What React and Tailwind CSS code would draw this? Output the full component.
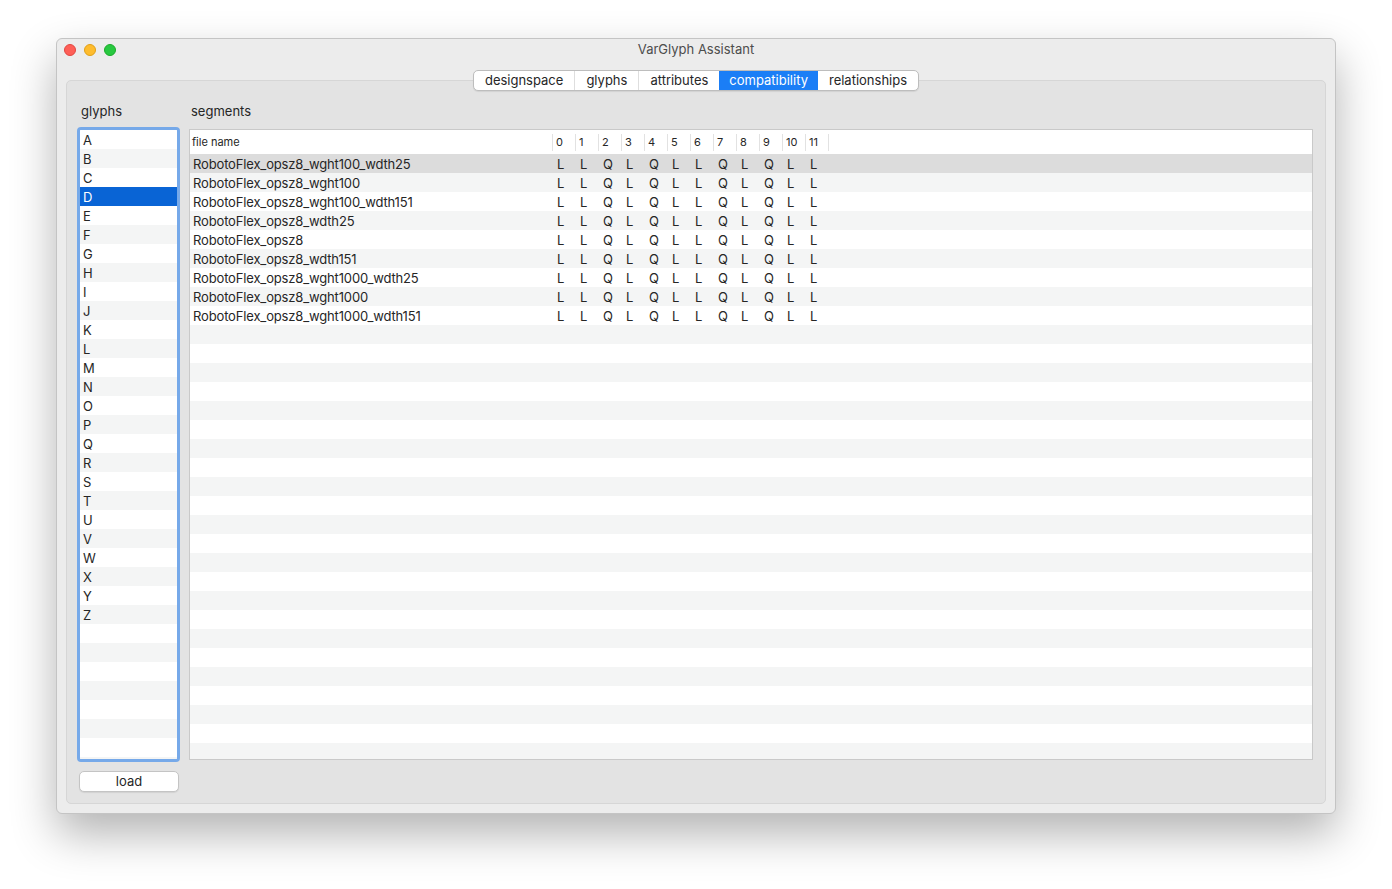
const tabs = ['designspace', 'glyphs', 'attributes', 'compatibility', 'relationships']
const glyphs = 'ABCDEFGHIJKLMNOPQRSTUVWXYZ'.split('')
const files = [
  'RobotoFlex_opsz8_wght100_wdth25',
  'RobotoFlex_opsz8_wght100',
  'RobotoFlex_opsz8_wght100_wdth151',
  'RobotoFlex_opsz8_wdth25',
  'RobotoFlex_opsz8',
  'RobotoFlex_opsz8_wdth151',
  'RobotoFlex_opsz8_wght1000_wdth25',
  'RobotoFlex_opsz8_wght1000',
  'RobotoFlex_opsz8_wght1000_wdth151',
]
const segs = ['L', 'L', 'Q', 'L', 'Q', 'L', 'L', 'Q', 'L', 'Q', 'L', 'L']
const cols = [0, 1, 2, 3, 4, 5, 6, 7, 8, 9, 10, 11]

function TabBar() {
  return (
    <div className="flex justify-center h-[21px] relative z-10">
      <div className="flex rounded-[5px] border border-[#bdbdbd] bg-white overflow-hidden shadow-[0_1px_1px_rgba(0,0,0,0.08)]">
        {tabs.map((t, i) => (
          <div
            key={t}
            className={
              t === 'compatibility'
                ? 'px-[10px] leading-[19px] bg-[#1b7ef6] text-white'
                : 'px-[11px] leading-[19px] text-[#262626]' + (i > 0 && tabs[i - 1] !== 'compatibility' ? ' border-l border-[#dedede]' : '')
            }
          >
            {t}
          </div>
        ))}
      </div>
    </div>
  )
}

function GlyphList() {
  const rows = Array.from({ length: 34 }, (_, i) => glyphs[i] || '')
  return (
    <div className="h-[635px] w-[103px] rounded-[4px] border-[3px] border-[#76a9e9] bg-white overflow-hidden">
      {rows.map((g, i) => (
        <div
          key={i}
          className={
            'h-[19px] pt-[1px] leading-[18px] pl-[3px] ' +
            (g === 'D' ? 'bg-[#0964d5] text-white' : i % 2 ? 'bg-[#f4f5f5]' : 'bg-white')
          }
        >
          {g}
        </div>
      ))}
    </div>
  )
}

function SegmentTable() {
  const rows = Array.from({ length: 33 }, (_, i) => files[i])
  return (
    <div className="h-[631px] border border-[#c9c9c9] bg-white overflow-hidden">
      <div className="flex items-center h-[24px] text-[11px] text-[#262626] bg-white">
        <div className="w-[363px] h-[17px] leading-[17px] pl-[2px] border-r border-[#e2e2e2]">file name</div>
        {cols.map((c) => (
          <div key={c} className="w-[23px] h-[17px] leading-[17px] pl-[3px] border-r border-[#e2e2e2]">
            {c}
          </div>
        ))}
      </div>
      {rows.map((f, i) => (
        <div
          key={i}
          className={
            'flex h-[19px] pt-[1px] leading-[18px] ' +
            (i === 0 ? 'bg-[#dcdcdc]' : i % 2 ? 'bg-[#f4f5f5]' : 'bg-white')
          }
        >
          {f && (
            <>
              <div className="w-[363px] pl-[3px] tracking-[-0.15px]">{f}</div>
              {segs.map((s, j) => (
                <div key={j} className="w-[23px] pl-[4px]">
                  {s}
                </div>
              ))}
            </>
          )}
        </div>
      ))}
    </div>
  )
}

export default function App() {
  return (
    <div className="w-[1392px] h-[889px] bg-white pt-[38px] pl-[56px] font-['Inter','Liberation_Sans',sans-serif] text-[13px] text-[#262626]">
      <div className="w-[1280px] h-[776px] rounded-[6px] bg-[#ececec] border border-[#c4c4c4] shadow-[0_20px_45px_rgba(0,0,0,0.3)] flex flex-col">
        <div className="h-[22px] flex items-center relative">
          <div className="flex gap-[8px] pl-[7px]">
            <span className="w-[12px] h-[12px] rounded-full bg-[#fe5f57] border border-[#e24640]" />
            <span className="w-[12px] h-[12px] rounded-full bg-[#febc2e] border border-[#e1a016]" />
            <span className="w-[12px] h-[12px] rounded-full bg-[#28c840] border border-[#1aab29]" />
          </div>
          <div className="flex-1 text-center text-[#4d4d4d] pr-[59px]">VarGlyph Assistant</div>
        </div>
        <div className="px-[9px] pt-[9px]">
          <TabBar />
          <div className="-mt-[11px] h-[724px] rounded-[5px] border border-[#d6d6d6] bg-[#e3e3e3] pt-[22px] pl-[10px] pr-[12px] flex gap-[9px]">
            <div className="flex flex-col w-[103px]">
              <div className="h-[16px] leading-[16px] pl-[4px]">glyphs</div>
              <div className="mt-[8px]">
                <GlyphList />
              </div>
              <button className="mt-[9px] ml-[2px] w-[100px] h-[21px] rounded-[5px] bg-white border border-[#c4c4c4] shadow-[0_1px_1px_rgba(0,0,0,0.08)] text-[13px] leading-[19px] text-[#262626]">
                load
              </button>
            </div>
            <div className="flex-1 flex flex-col">
              <div className="h-[16px] leading-[16px] pl-[2px]">segments</div>
              <div className="mt-[10px]">
                <SegmentTable />
              </div>
            </div>
          </div>
        </div>
      </div>
    </div>
  )
}
